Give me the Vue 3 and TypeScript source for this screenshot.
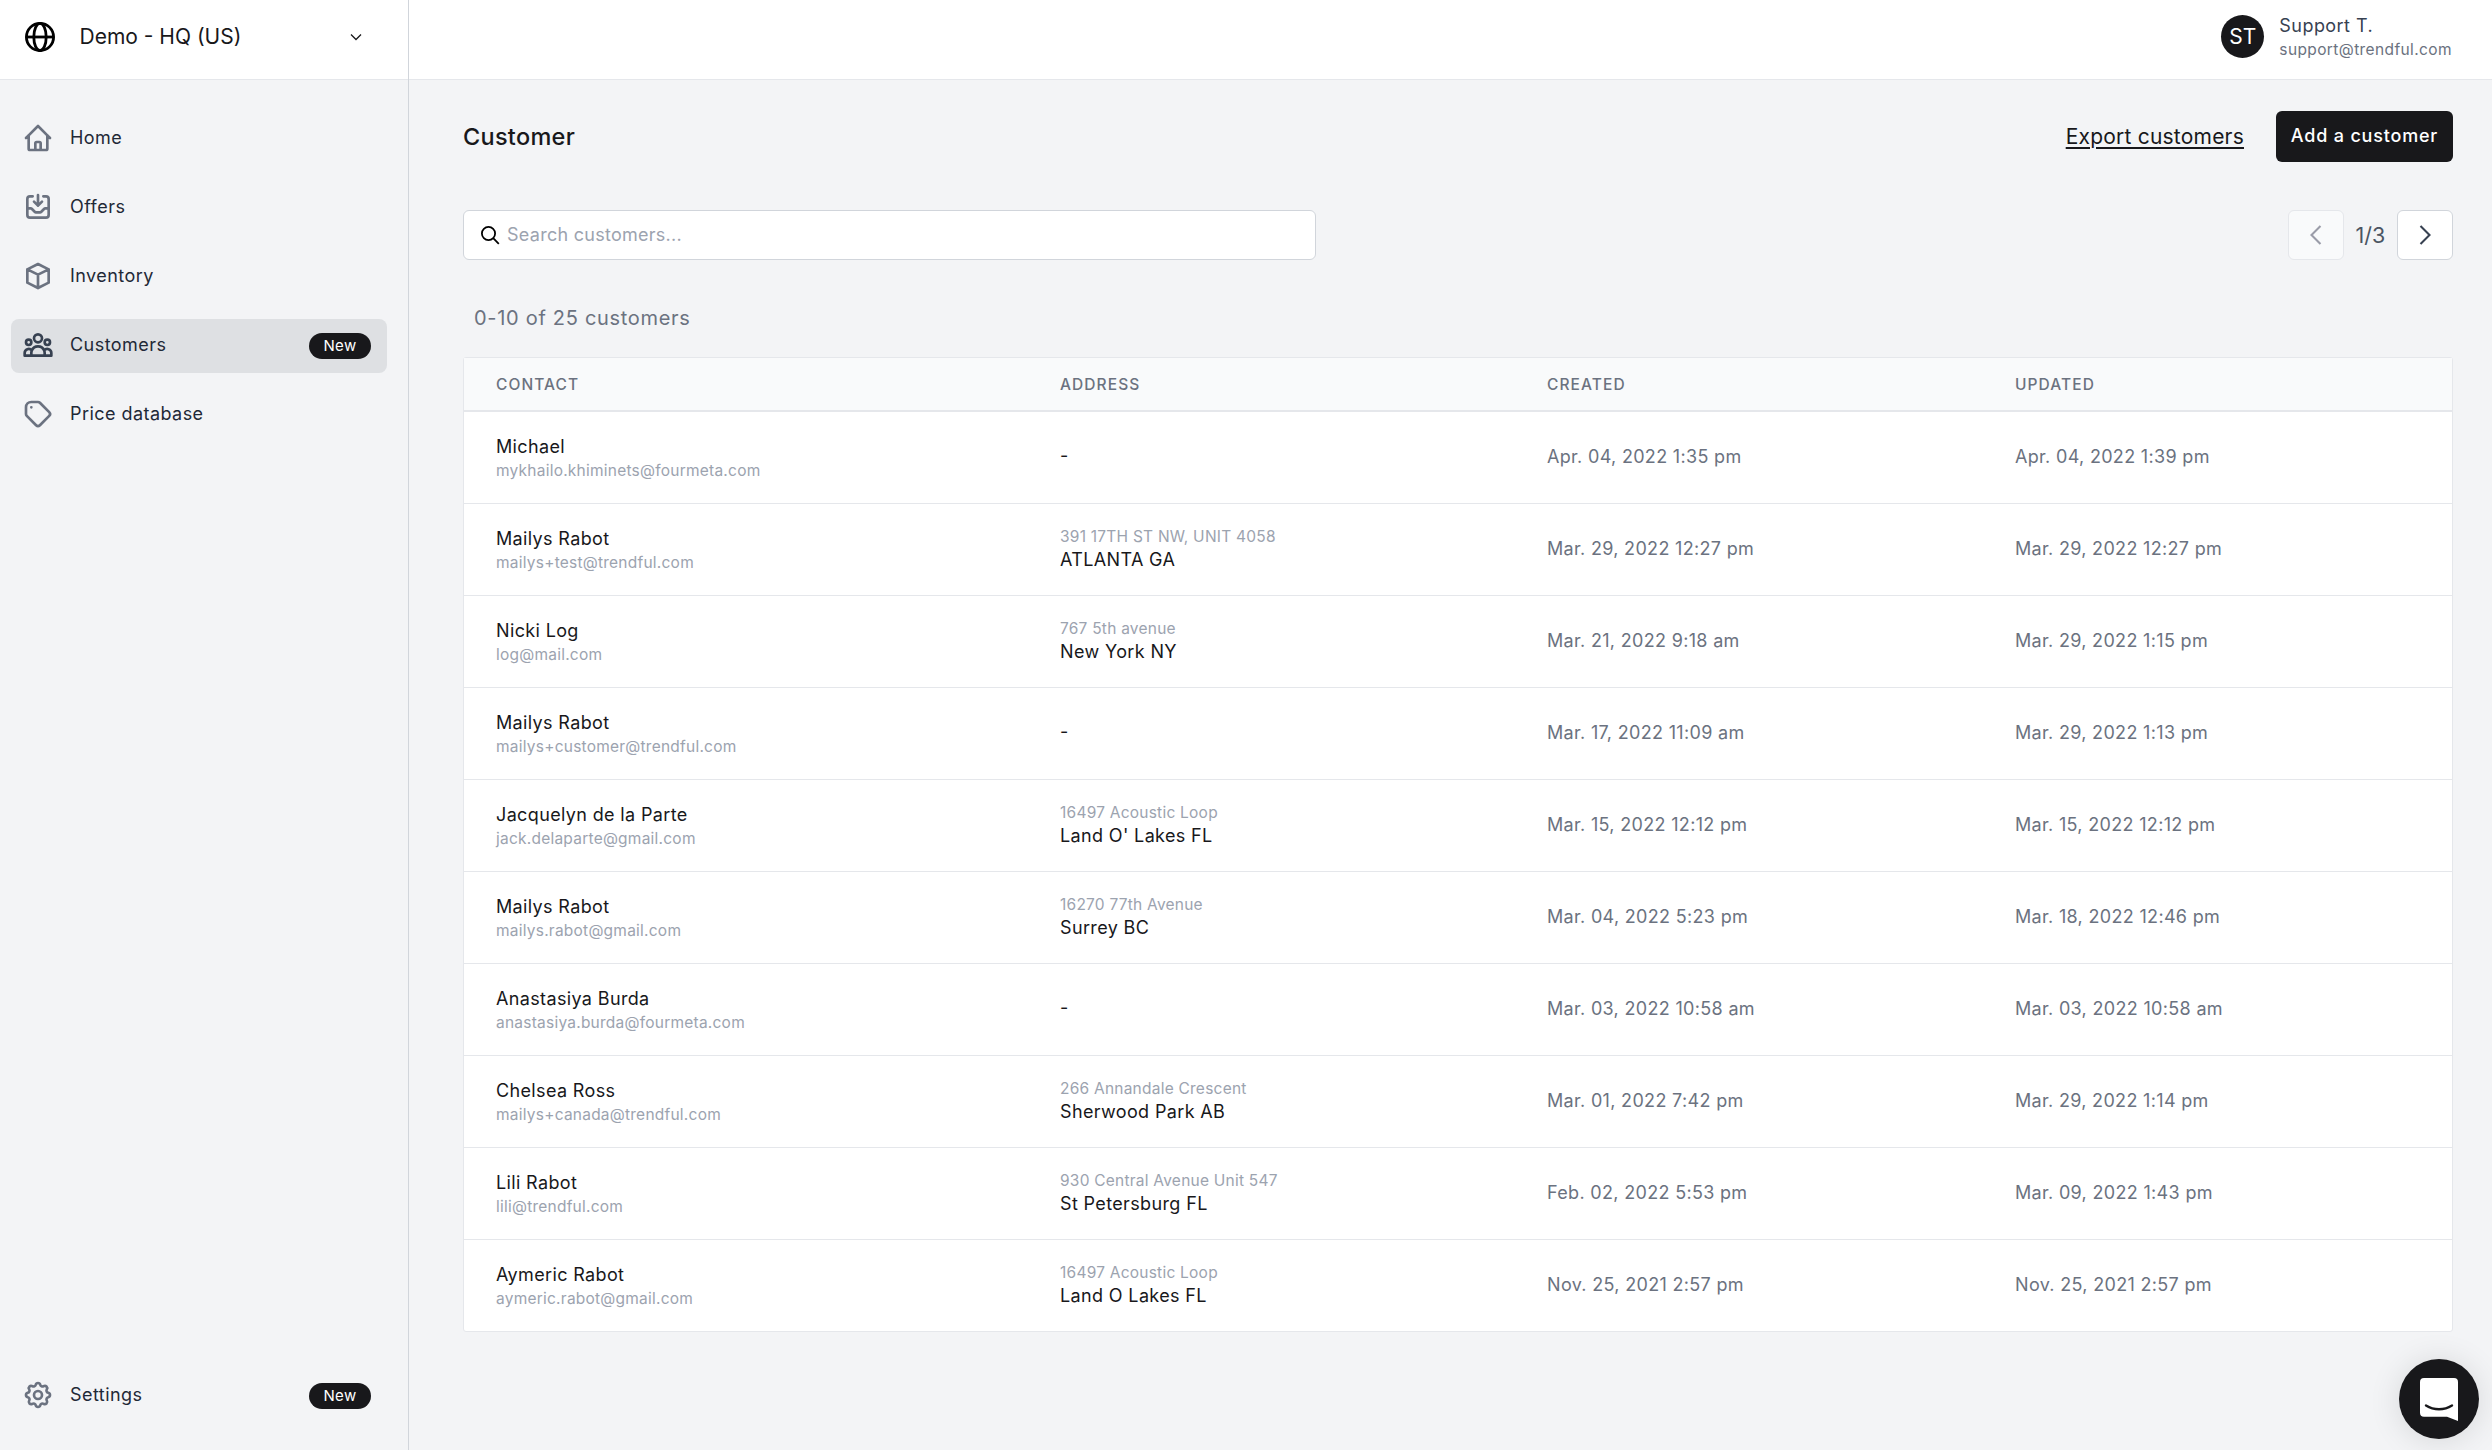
<script setup lang="ts">
interface Customer { name: string; email: string; street?: string; city?: string; created: string; updated: string }
const customers: Customer[] = [
  { name: 'Michael', email: 'mykhailo.khiminets@fourmeta.com', created: 'Apr. 04, 2022 1:35 pm', updated: 'Apr. 04, 2022 1:39 pm' },
  { name: 'Mailys Rabot', email: 'mailys+test@trendful.com', street: '391 17TH ST NW, UNIT 4058', city: 'ATLANTA GA', created: 'Mar. 29, 2022 12:27 pm', updated: 'Mar. 29, 2022 12:27 pm' },
  { name: 'Nicki Log', email: 'log@mail.com', street: '767 5th avenue', city: 'New York NY', created: 'Mar. 21, 2022 9:18 am', updated: 'Mar. 29, 2022 1:15 pm' },
  { name: 'Mailys Rabot', email: 'mailys+customer@trendful.com', created: 'Mar. 17, 2022 11:09 am', updated: 'Mar. 29, 2022 1:13 pm' },
  { name: 'Jacquelyn de la Parte', email: 'jack.delaparte@gmail.com', street: '16497 Acoustic Loop', city: "Land O' Lakes FL", created: 'Mar. 15, 2022 12:12 pm', updated: 'Mar. 15, 2022 12:12 pm' },
  { name: 'Mailys Rabot', email: 'mailys.rabot@gmail.com', street: '16270 77th Avenue', city: 'Surrey BC', created: 'Mar. 04, 2022 5:23 pm', updated: 'Mar. 18, 2022 12:46 pm' },
  { name: 'Anastasiya Burda', email: 'anastasiya.burda@fourmeta.com', created: 'Mar. 03, 2022 10:58 am', updated: 'Mar. 03, 2022 10:58 am' },
  { name: 'Chelsea Ross', email: 'mailys+canada@trendful.com', street: '266 Annandale Crescent', city: 'Sherwood Park AB', created: 'Mar. 01, 2022 7:42 pm', updated: 'Mar. 29, 2022 1:14 pm' },
  { name: 'Lili Rabot', email: 'lili@trendful.com', street: '930 Central Avenue Unit 547', city: 'St Petersburg FL', created: 'Feb. 02, 2022 5:53 pm', updated: 'Mar. 09, 2022 1:43 pm' },
  { name: 'Aymeric Rabot', email: 'aymeric.rabot@gmail.com', street: '16497 Acoustic Loop', city: 'Land O Lakes FL', created: 'Nov. 25, 2021 2:57 pm', updated: 'Nov. 25, 2021 2:57 pm' },
]
interface NavItem { label: string; paths: string[]; active?: boolean; badge?: boolean }
const nav: NavItem[] = [
  { label: 'Home', paths: ['M3 12l2-2m0 0l7-7 7 7M5 10v10a1 1 0 001 1h3m10-11l2 2m-2-2v10a1 1 0 01-1 1h-3m-6 0a1 1 0 001-1v-4a1 1 0 011-1h2a1 1 0 011 1v4a1 1 0 001 1m-6 0h6'] },
  { label: 'Offers', paths: ['M8 4H6a2 2 0 00-2 2v12a2 2 0 002 2h12a2 2 0 002-2V6a2 2 0 00-2-2h-2m-4-1v8m0 0l3-3m-3 3L9 8m-5 5h2.586a1 1 0 01.707.293l2.414 2.414a1 1 0 00.707.293h3.172a1 1 0 00.707-.293l2.414-2.414a1 1 0 01.707-.293H20'] },
  { label: 'Inventory', paths: ['M20 7l-8-4-8 4m16 0l-8 4m8-4v10l-8 4m0-10L4 7m8 4v10M4 7v10l8 4'] },
  { label: 'Customers', active: true, badge: true, paths: ['M17 20h5v-2a3 3 0 00-5.356-1.857M17 20H7m10 0v-2c0-.656-.126-1.283-.356-1.857M7 20H2v-2a3 3 0 015.356-1.857M7 20v-2c0-.656.126-1.283.356-1.857m0 0a5.002 5.002 0 019.288 0M15 7a3 3 0 11-6 0 3 3 0 016 0zm6 3a2 2 0 11-4 0 2 2 0 014 0zM7 10a2 2 0 11-4 0 2 2 0 014 0z'] },
  { label: 'Price database', paths: ['M7 7h.01M7 3h5c.512 0 1.024.195 1.414.586l7 7a2 2 0 010 2.828l-7 7a2 2 0 01-2.828 0l-7-7A1.994 1.994 0 013 12V7a4 4 0 014-4z'] },
]
const settings: NavItem = { label: 'Settings', badge: true, paths: ['M10.325 4.317c.426-1.756 2.924-1.756 3.35 0a1.724 1.724 0 002.573 1.066c1.543-.94 3.31.826 2.37 2.37a1.724 1.724 0 001.065 2.572c1.756.426 1.756 2.924 0 3.35a1.724 1.724 0 00-1.066 2.573c.94 1.543-.826 3.31-2.37 2.37a1.724 1.724 0 00-2.572 1.065c-.426 1.756-2.924 1.756-3.35 0a1.724 1.724 0 00-2.573-1.066c-1.543.94-3.31-.826-2.37-2.37a1.724 1.724 0 00-1.065-2.572c-1.756-.426-1.756-2.924 0-3.35a1.724 1.724 0 001.066-2.573c-.94-1.543.826-3.31 2.37-2.37.996.608 2.296.07 2.572-1.065z', 'M15 12a3 3 0 11-6 0 3 3 0 016 0z'] }
</script>

<template>
  <div class="app">
    <aside class="sidebar">
      <div class="brand">
        <svg class="globe" viewBox="0 0 32 32" fill="none" stroke="#000" stroke-width="2.8">
          <circle cx="16" cy="16" r="13.6" />
          <ellipse cx="16" cy="16" rx="6.2" ry="13.6" />
          <path d="M2.5 16h27" />
        </svg>
        <span class="brand-name">Demo - HQ (US)</span>
        <svg class="chev" viewBox="0 0 14 14" fill="none" stroke="#18181b" stroke-width="1.3"><path d="M2 4.5l5 5 5-5" /></svg>
      </div>
      <nav class="nav">
        <a v-for="item in nav" :key="item.label" class="nav-item" :class="{ active: item.active }">
          <svg class="nav-icon" viewBox="0 0 24 24" fill="none" stroke-width="2" stroke-linecap="round" stroke-linejoin="round">
            <path v-for="d in item.paths" :key="d" :d="d" />
          </svg>
          <span class="nav-label">{{ item.label }}</span>
          <span v-if="item.badge" class="badge">New</span>
        </a>
      </nav>
      <div class="nav-bottom">
        <a class="nav-item">
          <svg class="nav-icon" viewBox="0 0 24 24" fill="none" stroke-width="2" stroke-linecap="round" stroke-linejoin="round">
            <path v-for="d in settings.paths" :key="d" :d="d" />
          </svg>
          <span class="nav-label">{{ settings.label }}</span>
          <span class="badge">New</span>
        </a>
      </div>
    </aside>
    <div class="content">
      <header class="topbar">
        <div class="avatar">ST</div>
        <div class="user">
          <div class="user-name">Support T.</div>
          <div class="user-mail">support@trendful.com</div>
        </div>
      </header>
      <main class="main">
        <div class="title-row">
          <h1 class="title">Customer</h1>
          <div class="actions">
            <a class="export">Export customers</a>
            <button class="add">Add a customer</button>
          </div>
        </div>
        <div class="filter-row">
          <div class="search">
            <svg class="search-icon" viewBox="0 0 20 20" fill="none" stroke="#000" stroke-width="1.8"><circle cx="8.5" cy="8.5" r="6.6" /><path d="M13.2 13.2l5.6 5.6" /></svg>
            <span class="placeholder">Search customers...</span>
          </div>
          <div class="pager">
            <button class="page-btn disabled">
              <svg viewBox="0 0 16 16" fill="none" stroke="#9a9ca8" stroke-width="1.4"><path d="M11 2L5 8l6 6" /></svg>
            </button>
            <span class="page-num">1/3</span>
            <button class="page-btn">
              <svg viewBox="0 0 16 16" fill="none" stroke="#374151" stroke-width="1.4"><path d="M5 2l6 6-6 6" /></svg>
            </button>
          </div>
        </div>
        <div class="count">0-10 of 25 customers</div>
        <div class="table">
          <div class="row head">
            <div>CONTACT</div><div>ADDRESS</div><div>CREATED</div><div>UPDATED</div>
          </div>
          <div v-for="c in customers" :key="c.email" class="row body">
            <div class="contact">
              <div class="primary">{{ c.name }}</div>
              <div class="secondary">{{ c.email }}</div>
            </div>
            <div v-if="c.street" class="address">
              <div class="secondary street">{{ c.street }}</div>
              <div class="primary">{{ c.city }}</div>
            </div>
            <div v-else class="primary lifted">-</div>
            <div class="date lifted">{{ c.created }}</div>
            <div class="date lifted">{{ c.updated }}</div>
          </div>
        </div>
      </main>
    </div>
    <button class="chat" aria-label="Chat">
      <svg viewBox="0 0 38 43" width="38" height="43">
        <path fill="#fff" d="M4 0h30a4 4 0 0 1 4 4v39l-11-4.300H4a4 4 0 0 1-4-4V4a4 4 0 0 1 4-4z" />
        <path fill="none" stroke="#18181b" stroke-width="2.4" stroke-linecap="round" d="M6 27.500c8 5 18 5 26 0" />
      </svg>
    </button>
  </div>
</template>

<style>
html, body { margin: 0; background: #f3f4f6; }
</style>

<style scoped>
.app {
  display: flex;
  width: 2492px;
  height: 1450px;
  overflow: hidden;
  background: #f3f4f6;
  font-family: Inter, "Liberation Sans", sans-serif;
  color: #18181b;
}
.sidebar {
  width: 408px;
  flex: none;
  display: flex;
  flex-direction: column;
  border-right: 1px solid #d1d5db;
}
.brand {
  height: 73px;
  background: #fff;
  border-bottom: 1px solid #e5e7eb;
  display: flex;
  align-items: center;
  padding: 0 45px 6px 24px;
}
.globe { width: 32px; height: 32px; flex: none; }
.brand-name { margin-left: 23.5px; font-size: 21px; flex: 1; }
.chev { width: 14px; height: 14px; }
.nav {
  display: flex;
  flex-direction: column;
  gap: 15px;
  padding: 32px 21px 0 11px;
}
.nav-item {
  height: 54px;
  display: flex;
  align-items: center;
  padding: 0 16px 0 11px;
  border-radius: 8px;
  stroke: #6b7280;
}
.nav-item.active { background: #dee0e3; stroke: #374151; }
.nav-icon { width: 32px; height: 32px; flex: none; margin-top: -2px; }
.nav-label { margin-left: 16px; padding-bottom: 3px; font-size: 18px; letter-spacing: 0.025em; color: #1f2937; flex: 1; }
.badge {
  background: #18181b;
  color: #fff;
  font-size: 15px;
  height: 26px;
  line-height: 26px;
  width: 62px;
  text-align: center;
  border-radius: 13px;
  letter-spacing: 0.02em;
}
.nav-bottom { margin-top: auto; padding: 0 21px 27px 11px; }
.content { flex: 1; min-width: 0; display: flex; flex-direction: column; }
.topbar {
  height: 73px;
  background: #fff;
  border-bottom: 1px solid #e5e7eb;
  display: flex;
  align-items: center;
  justify-content: flex-end;
  padding: 0 40px 6px;
}
.avatar {
  width: 43px;
  height: 43px;
  border-radius: 50%;
  background: #18181b;
  color: #fff;
  display: flex;
  align-items: center;
  justify-content: center;
  font-size: 21px;
}
.user { margin-left: 15px; padding-top: 2px; }
.user-name { font-size: 18px; letter-spacing: 0.025em; color: #374151; line-height: 24px; }
.user-mail { font-size: 15.5px; letter-spacing: 0.025em; color: #6b7280; line-height: 24px; }
.main { padding: 31px 39px 0 54px; flex: 1; }
.title-row { display: flex; align-items: center; justify-content: space-between; height: 51px; }
.title { margin: 0; font-size: 23.5px; font-weight: 500; letter-spacing: 0.012em; }
.actions { display: flex; align-items: center; gap: 32px; }
.export { font-size: 21px; text-decoration: underline; text-underline-offset: 3px; letter-spacing: 0.01em; }
.add {
  height: 51px;
  width: 177px;
  border: none;
  border-radius: 6px;
  background: #18181b;
  color: #fff;
  font: 500 18px Inter, sans-serif;
  letter-spacing: 0.045em;
  padding: 0 0 2px;
}
.filter-row { display: flex; align-items: center; justify-content: space-between; margin-top: 48px; }
.search {
  width: 853px;
  height: 50px;
  box-sizing: border-box;
  background: #fff;
  border: 1px solid #d1d5db;
  border-radius: 6px;
  display: flex;
  align-items: center;
  padding-left: 16px;
}
.search-icon { width: 20px; height: 20px; }
.placeholder { margin-left: 7px; padding-bottom: 2px; font-size: 18px; letter-spacing: 0.015em; color: #9ca3af; }
.pager { display: flex; align-items: center; }
.page-btn {
  width: 56px;
  height: 50px;
  box-sizing: border-box;
  padding: 0;
  border: 1px solid #d1d5db;
  border-radius: 6px;
  background: #fff;
  display: flex;
  align-items: center;
  justify-content: center;
}
.page-btn svg { width: 24px; height: 24px; }
.page-btn.disabled { background: #f9fafb; border-color: #e5e7eb; }
.page-num { width: 53px; text-align: center; font-size: 21.5px; color: #4b5563; }
.count { margin: 42px 0 0 11px; font-size: 20px; letter-spacing: 0.035em; color: #6b7280; line-height: 32px; }
.table {
  margin-top: 23px;
  background: #fff;
  border: 1px solid #e5e7eb;
  border-radius: 3px;
}
.row {
  display: grid;
  grid-template-columns: 564px 487px 468px 1fr;
  align-items: center;
  padding-left: 32px;
}
.head {
  height: 52px;
  background: #f9fafb;
  border-bottom: 2px solid #e5e7eb;
  font-size: 15.5px;
  letter-spacing: 0.07em;
  color: #6b7280;
  font-weight: 500;
}
.body { height: 91px; border-bottom: 1px solid #e5e7eb; }
.body:last-child { border-bottom: none; }
.contact { padding-top: 2px; }
.lifted { margin-bottom: 3px; }
.address { margin-bottom: 2px; }
.primary { font-size: 18px; line-height: 24px; letter-spacing: 0.02em; color: #18181b; }
.secondary { font-size: 15.5px; line-height: 23px; letter-spacing: 0.015em; color: #9ca3af; }
.date { font-size: 18px; letter-spacing: 0.018em; color: #6b7280; }
.chat {
  position: fixed;
  left: 2399px;
  top: 1359px;
  width: 80px;
  height: 80px;
  border: none;
  border-radius: 50%;
  background: #18181b;
  display: flex;
  align-items: center;
  justify-content: center;
  padding: 0;
  box-shadow: 0 2px 32px rgba(0,0,0,.12);
}
</style>
